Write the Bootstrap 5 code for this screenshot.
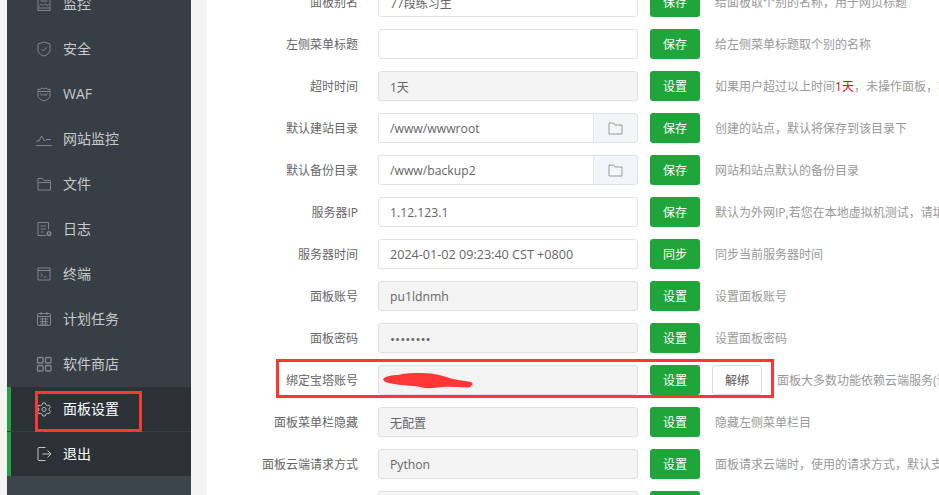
<!DOCTYPE html>
<html lang="zh-CN">
<head>
<meta charset="utf-8">
<title>面板设置</title>
<link href="https://cdn.jsdelivr.net/npm/bootstrap@5.3.0/dist/css/bootstrap.min.css" rel="stylesheet">
<style>
html,body{height:495px;overflow:hidden}
body{background:#f4f4f4;font-family:"Open Sans","Noto Sans CJK SC",sans-serif;font-size:12px;color:#666}
.shell{height:495px;padding-left:7px;gap:16px}
.side{width:184px;flex:none;background:#3c444c;height:495px;overflow:hidden}
.side-list{margin-top:-18px;background:#373e45}
.side-item{height:44px;margin-bottom:1px;padding-left:29px;gap:11px;font-size:14px;color:#c8cacc;background:#373e45}
.side-item span{margin-top:-2px}
.side-item svg{width:16px;height:16px;flex:none;fill:none;stroke:#80858a;stroke-width:1}
.side-item.on{background:#2c3138;color:#fff;border-left:4px solid #20a53a;padding-left:25px}
.side-item.on svg{stroke:#c4c6c8}
.panel{background:#fff;flex:1;min-width:0;height:495px;overflow:hidden;position:relative}
.rows{margin-top:-13px}
.set-row{height:30px;margin-bottom:12px;white-space:nowrap}
.set-label{width:151px;flex:none;text-align:right;color:#666;padding-top:2px}
.set-field{width:260px;flex:none;margin-left:20px}
.set-field .form-control{height:30px;min-height:30px;font-size:12px;color:#666;padding:1px 11px 0;border:1px solid #e0e2ea;border-radius:3px;box-shadow:none;font-family:inherit}
.set-field .form-control.wide-val{font-size:12.2px}
.set-field .form-control.date-val{font-size:12.6px}
.set-field .form-control.dots-val{font-size:13.5px}
.set-field .form-control[readonly]{background:#f4f4f4;border-color:#dfe0e2}
.set-field .input-group-text{width:45px;height:30px;justify-content:center;padding:0;background:#f4f5f9;border:1px solid #e0e2ea;border-radius:0 3px 3px 0}
.set-field .input-group-text svg{width:15px;height:14px;fill:none;stroke:#999;stroke-width:1}
.go-btn{width:50px;height:30px;flex:none;margin-left:12px;padding:1px 0 0;font-size:12px;line-height:29px;background:#20a53a;color:#fff;border:0;border-radius:3px}
.go-btn:hover{background:#20a53a;color:#fff}
.off-btn{width:50px;height:30px;flex:none;margin-left:12px;padding:1px 0 0;font-size:12px;background:#fff;color:#555;border:1px solid #dfe0e2;border-radius:3px}
.note{margin-left:15px;color:#999;padding-top:2px}
.note b{color:#f00;font-weight:400}
.mark-box{position:absolute;border:3px solid #ff3636;pointer-events:none}
.mark-side{left:35px;top:391px;width:107px;height:41px}
.mark-row{left:69px;top:359px;width:498px;height:39px}
.scribble{position:absolute;left:176px;top:373px;width:90px;height:16px}
</style>
</head>
<body>
<div class="shell d-flex">
  <nav class="side">
    <div class="side-list">
      <div class="side-item d-flex align-items-center"><svg viewBox="0 0 16 16"><path d="M2 1.500h12v13H2zM4.500 5h7M2.500 12h11M3.500 9.500l2-1.500 1.500 1.500 2-2 1.500 2 2-1"/></svg><span>监控</span></div>
      <div class="side-item d-flex align-items-center"><svg viewBox="0 0 16 16"><path d="M8 1l6 2v6c0 3-3 5-6 6-3-1-6-3-6-6V3zM5.500 8l2 2 3-3.500"/></svg><span>安全</span></div>
      <div class="side-item d-flex align-items-center"><svg viewBox="0 0 16 16"><path d="M2 3l2 .5L6 2l2 1 2-1 2 1.500 2-.5v7c0 2-3 4-6 5-3-1-6-3-6-5zM2 5.500h12M4.500 7.500l1 2 1-1.500 1.500 1.500 1-1.500 1 1.500 1.500-2"/></svg><span>WAF</span></div>
      <div class="side-item d-flex align-items-center"><svg viewBox="0 0 16 16"><path d="M0 10h3l2.500-5 3 5 1.500-1.500h5M0 14.500h16"/></svg><span>网站监控</span></div>
      <div class="side-item d-flex align-items-center"><svg viewBox="0 0 16 16"><path d="M2 14V2.500h4.500L8 4.500h6.500v2M2 14h12.500V6.500H3.500L2 8"/></svg><span>文件</span></div>
      <div class="side-item d-flex align-items-center"><svg viewBox="0 0 16 16"><path d="M12.500 8.500V1.500H2v13h8M4.500 5h5.500M4.500 8h5.500M4.500 11h3"/><circle cx="13" cy="12.500" r="1.800" stroke-width="1.500"/></svg><span>日志</span></div>
      <div class="side-item d-flex align-items-center"><svg viewBox="0 0 16 16"><path d="M2 2h12v12H2zM2 4.500h12M4.500 7l2 1.800-2 1.700M7.500 11h3"/></svg><span>终端</span></div>
      <div class="side-item d-flex align-items-center"><svg viewBox="0 0 16 16"><path d="M3 2.500h10a1.500 1.500 0 0 1 1.500 1.500v9a1.500 1.500 0 0 1-1.500 1.500H3A1.500 1.500 0 0 1 1.500 13V4A1.500 1.500 0 0 1 3 2.500zM5 1v3M11 1v3M1.500 5.500h13M4 8h8M4 10.500h8M4 13h8M6.500 6.500v7M9.500 6.500v7"/></svg><span>计划任务</span></div>
      <div class="side-item d-flex align-items-center"><svg viewBox="0 0 16 16" style="stroke-width:1.400"><rect x="1.500" y="1.500" width="5.500" height="5.500" rx="1"/><rect x="9.500" y="1.500" width="5.500" height="5.500" rx="1"/><rect x="1.500" y="9.500" width="5.500" height="5.500" rx="1"/><rect x="9.500" y="9.500" width="5.500" height="5.500" rx="1"/></svg><span>软件商店</span></div>
      <div class="side-item on d-flex align-items-center"><svg viewBox="-1 -1 18 18"><path d="M6.500 1.200h3l.5 2 1.700 1 2-.6 1.500 2.600-1.500 1.400v1.800l1.500 1.400-1.500 2.600-2-.6-1.700 1-.5 2h-3l-.5-2-1.700-1-2 .6L.8 10.800l1.500-1.400V7.600L.8 6.200l1.500-2.600 2 .6 1.700-1z"/><circle cx="8" cy="8.500" r="2.300"/></svg><span>面板设置</span></div>
      <div class="side-item on d-flex align-items-center"><svg viewBox="0 0 16 16"><path d="M9.500 1.500H3a1 1 0 0 0-1 1v11a1 1 0 0 0 1 1h6.500M6.500 8h8.500M11.500 4.500L15 8l-3.500 3.500"/></svg><span>退出</span></div>
    </div>
  </nav>
  <main class="panel">
    <div class="rows">
      <div class="set-row d-flex align-items-center"><div class="set-label">面板别名</div><div class="set-field"><input class="form-control" value="77段练习生"></div><button class="btn go-btn">保存</button><div class="note">给面板取个别的名称，用于网页标题</div></div>
      <div class="set-row d-flex align-items-center"><div class="set-label">左侧菜单标题</div><div class="set-field"><input class="form-control" value=""></div><button class="btn go-btn">保存</button><div class="note">给左侧菜单标题取个别的名称</div></div>
      <div class="set-row d-flex align-items-center"><div class="set-label">超时时间</div><div class="set-field"><input class="form-control" readonly value="1天"></div><button class="btn go-btn">设置</button><div class="note">如果用户超过以上时间<b>1天</b>，未操作面板，将自动退出面板</div></div>
      <div class="set-row d-flex align-items-center"><div class="set-label">默认建站目录</div><div class="set-field input-group flex-nowrap"><input class="form-control wide-val" value="/www/wwwroot"><span class="input-group-text"><svg viewBox="0 0 15 14"><path d="M1 2h4.500l1.500 2h7v9H1z"/></svg></span></div><button class="btn go-btn">保存</button><div class="note">创建的站点，默认将保存到该目录下</div></div>
      <div class="set-row d-flex align-items-center"><div class="set-label">默认备份目录</div><div class="set-field input-group flex-nowrap"><input class="form-control wide-val" value="/www/backup2"><span class="input-group-text"><svg viewBox="0 0 15 14"><path d="M1 2h4.500l1.500 2h7v9H1z"/></svg></span></div><button class="btn go-btn">保存</button><div class="note">网站和站点默认的备份目录</div></div>
      <div class="set-row d-flex align-items-center"><div class="set-label">服务器IP</div><div class="set-field"><input class="form-control wide-val" value="1.12.123.1"></div><button class="btn go-btn">保存</button><div class="note">默认为外网IP,若您在本地虚拟机测试，请填写虚拟机内网IP!</div></div>
      <div class="set-row d-flex align-items-center"><div class="set-label">服务器时间</div><div class="set-field"><input class="form-control date-val" value="2024-01-02 09:23:40 CST +0800"></div><button class="btn go-btn">同步</button><div class="note">同步当前服务器时间</div></div>
      <div class="set-row d-flex align-items-center"><div class="set-label">面板账号</div><div class="set-field"><input class="form-control wide-val" readonly value="pu1ldnmh"></div><button class="btn go-btn">设置</button><div class="note">设置面板账号</div></div>
      <div class="set-row d-flex align-items-center"><div class="set-label">面板密码</div><div class="set-field"><input class="form-control dots-val" readonly type="password" value="12345678"></div><button class="btn go-btn">设置</button><div class="note">设置面板密码</div></div>
      <div class="set-row d-flex align-items-center"><div class="set-label">绑定宝塔账号</div><div class="set-field"><input class="form-control" readonly value=""></div><button class="btn go-btn">设置</button><button class="btn off-btn">解绑</button><div class="note">面板大多数功能依赖云端服务(请绑定宝塔账号)</div></div>
      <div class="set-row d-flex align-items-center"><div class="set-label">面板菜单栏隐藏</div><div class="set-field"><input class="form-control" readonly value="无配置"></div><button class="btn go-btn">设置</button><div class="note">隐藏左侧菜单栏目</div></div>
      <div class="set-row d-flex align-items-center"><div class="set-label">面板云端请求方式</div><div class="set-field"><input class="form-control wide-val" readonly value="Python"></div><button class="btn go-btn">设置</button><div class="note">面板请求云端时，使用的请求方式，默认支持</div></div>
      <div class="set-row d-flex align-items-center"><div class="set-label"></div><div class="set-field"><input class="form-control" readonly value=""></div><button class="btn go-btn">设置</button></div>
    </div>
    <div class="mark-box mark-row"></div>
    <svg class="scribble" viewBox="0 0 90 16"><path d="M0 6C3 3 9 2 15 2 23 0 30 0 38 0c8 0 16 1 22 3 6 2 10 3 15 4 5 1 10 1 13 2 2 1 2 3 1 3-1 2-3 2.500-5 2.500-8 0-16-1-24-.5-6 .5-11 1.500-18 1-4-.5-8-2-12-2C7 11 1 10 0 6z" fill="#ff3636"/></svg>
  </main>
</div>
<div class="mark-box mark-side"></div>
</body>
</html>
